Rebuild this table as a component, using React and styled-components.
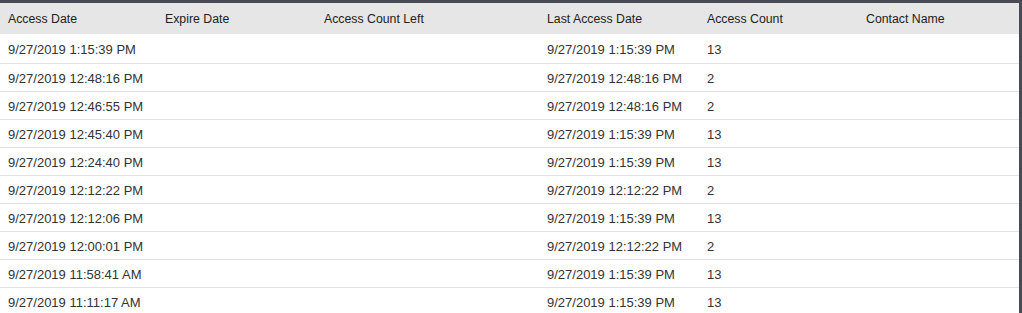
import React from "react";
import styled, { createGlobalStyle } from "styled-components";

const rows = [
    ["9/27/2019 1:15:39 PM", "9/27/2019 1:15:39 PM", "13"],
    ["9/27/2019 12:48:16 PM", "9/27/2019 12:48:16 PM", "2"],
    ["9/27/2019 12:46:55 PM", "9/27/2019 12:48:16 PM", "2"],
    ["9/27/2019 12:45:40 PM", "9/27/2019 1:15:39 PM", "13"],
    ["9/27/2019 12:24:40 PM", "9/27/2019 1:15:39 PM", "13"],
    ["9/27/2019 12:12:22 PM", "9/27/2019 12:12:22 PM", "2"],
    ["9/27/2019 12:12:06 PM", "9/27/2019 1:15:39 PM", "13"],
    ["9/27/2019 12:00:01 PM", "9/27/2019 12:12:22 PM", "2"],
    ["9/27/2019 11:58:41 AM", "9/27/2019 1:15:39 PM", "13"],
    ["9/27/2019 11:11:17 AM", "9/27/2019 1:15:39 PM", "13"],
];

const columns = [
    "Access Date",
    "Expire Date",
    "Access Count Left",
    "Last Access Date",
    "Access Count",
    "Contact Name",
];

function App() {
    return (
        <>
            <GlobalStyle />
            <Frame>
                <HeaderRow>
                    {columns.map((c) => (
                        <HeadCell key={c}>{c}</HeadCell>
                    ))}
                </HeaderRow>
                {rows.map((r, i) => (
                    <Row key={i} $first={i === 0}>
                        <Cell>{r[0]}</Cell>
                        <Cell />
                        <Cell />
                        <Cell>{r[1]}</Cell>
                        <Cell>{r[2]}</Cell>
                        <Cell />
                    </Row>
                ))}
            </Frame>
        </>
    );
}

const GlobalStyle = createGlobalStyle`
    body {
        margin: 0;
        background: #fff;
        font-family: "Liberation Sans", Arial, sans-serif;
    }
`;

const Frame = styled.div`
    height: 313px;
    overflow: hidden;
    border-top: 3px solid #484b53;
    border-right: 3px solid #484b53;
    box-sizing: border-box;
`;

const grid = `
    display: grid;
    grid-template-columns: 157px 159px 223px 160px 159px 1fr;
    align-items: center;
    box-sizing: border-box;
`;

const HeaderRow = styled.div`
    ${grid}
    height: 31px;
    background: #e6e6e6;
    color: #222;
    font-size: 12.3px;
`;

const HeadCell = styled.div`
    padding-left: 8px;
    white-space: nowrap;
`;

const Row = styled.div`
    ${grid}
    height: ${(p) => (p.$first ? "30px" : "28px")};
    padding-top: 1px;
    border-bottom: 1px solid #e2e2e2;
    color: #333;
    font-size: 13px;
`;

const Cell = styled.div`
    padding-left: 8px;
    white-space: nowrap;
`;

export default App;
